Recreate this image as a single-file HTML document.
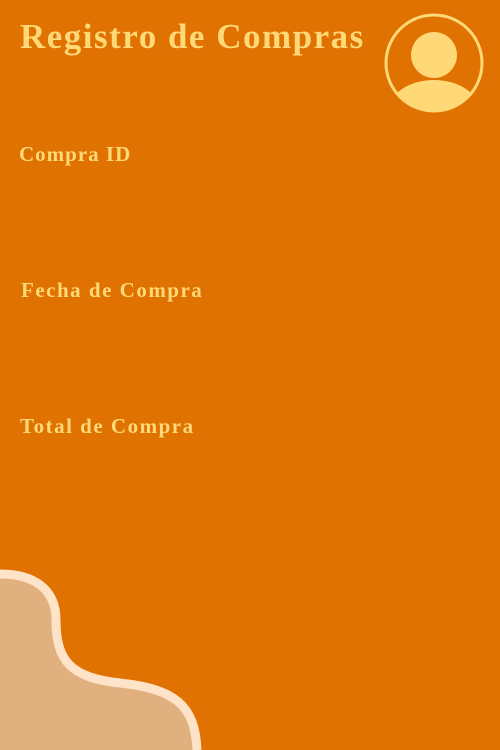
<!DOCTYPE html>
<html><head><style>
body{margin:0;width:500px;height:750px;background:#df7200;position:relative;overflow:hidden;font-family:"Liberation Serif",serif;color:#ffd877}
.t{position:absolute;left:20px;top:17px;font-size:35px;font-weight:bold;letter-spacing:1.5px}
.l{position:absolute;font-size:21px;font-weight:bold;letter-spacing:1.5px}
</style></head><body>
<div class="t">Registro de Compras</div>
<svg width="500" height="750" style="position:absolute;left:0;top:0">
<defs><clipPath id="c"><circle cx="434" cy="63" r="47"/></clipPath></defs>
<circle cx="434" cy="63" r="48" fill="none" stroke="#ffd877" stroke-width="3"/>
<circle cx="434" cy="55" r="23" fill="#ffd877"/>
<ellipse cx="434" cy="112" rx="46" ry="32" fill="#ffd877" clip-path="url(#c)"/>
<path d="M0 574 C35 574 56 590 56 620 C56 660 70 678 120 683 C175 689 195 705 197 750 L0 750 Z" fill="#e0b07f"/>
<path d="M0 574 C35 574 56 590 56 620 C56 660 70 678 120 683 C175 689 195 705 197 750" fill="none" stroke="#ffe3c8" stroke-width="9"/>
</svg>
<div class="l" style="left:19px;top:142px;letter-spacing:1px">Compra ID</div>
<div class="l" style="left:21px;top:278px">Fecha de Compra</div>
<div class="l" style="left:20px;top:414px">Total de Compra</div>
</body></html>
